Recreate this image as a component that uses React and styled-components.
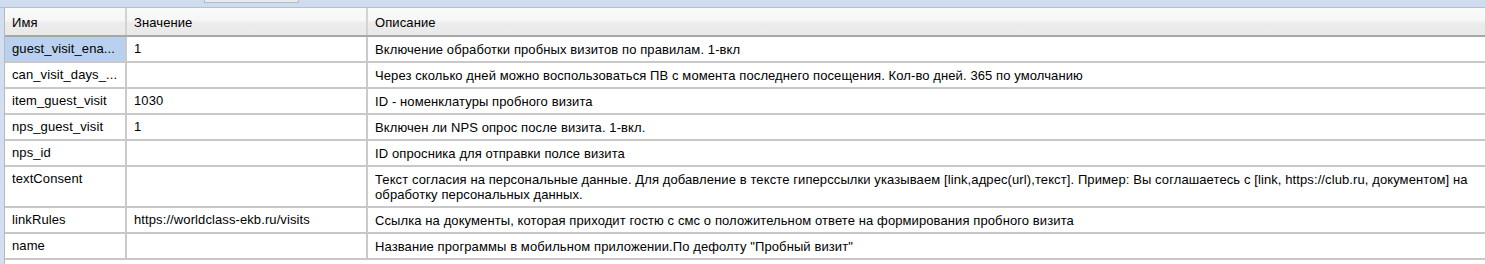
import React from "react";
import styled, { createGlobalStyle } from "styled-components";

const GlobalStyle = createGlobalStyle`
  html, body {
    margin: 0;
    padding: 0;
    background: #ffffff;
    font-family: "Liberation Sans", Arial, sans-serif;
  }
  * { box-sizing: border-box; }
`;

const rows = [
  { name: "guest_visit_ena...", value: "1", desc: "Включение обработки пробных визитов по правилам. 1-вкл", selected: true },
  { name: "can_visit_days_...", value: "", desc: "Через сколько дней можно воспользоваться ПВ с момента последнего посещения. Кол-во дней. 365 по умолчанию" },
  { name: "item_guest_visit", value: "1030", desc: "ID - номенклатуры пробного визита" },
  { name: "nps_guest_visit", value: "1", desc: "Включен ли NPS опрос после визита. 1-вкл." },
  { name: "nps_id", value: "", desc: "ID опросника для отправки полсе визита" },
  {
    name: "textConsent",
    value: "",
    desc: "Текст согласия на персональные данные. Для добавление в тексте гиперссылки указываем [link,адрес(url),текст]. Пример: Вы соглашаетесь с [link, https://club.ru, документом] на обработку персональных данных.",
  },
  { name: "linkRules", value: "https://worldclass-ekb.ru/visits", desc: "Ссылка на документы, которая приходит гостю с смс о положительном ответе на формирования пробного визита" },
  { name: "name", value: "", desc: "Название программы в мобильном приложении.По дефолту \"Пробный визит\"" },
];

export default function App() {
  return (
    <>
      <GlobalStyle />
      <Page>
        <TopBar>
          <TabStub />
        </TopBar>
        <Body>
          <SideStrip />
          <Grid>
            <HeadRow>
              <HeadCell>Имя</HeadCell>
              <HeadCell>Значение</HeadCell>
              <HeadCell>Описание</HeadCell>
            </HeadRow>
            {rows.map((r) => (
              <Row key={r.name}>
                <Cell $selected={r.selected}>{r.name}</Cell>
                <Cell>{r.value}</Cell>
                <DescCell>{r.desc}</DescCell>
              </Row>
            ))}
          </Grid>
        </Body>
      </Page>
    </>
  );
}

const Page = styled.div`
  width: 1485px;
  height: 264px;
  overflow: hidden;
  display: flex;
  flex-direction: column;
  background: #ffffff;
`;

const TopBar = styled.div`
  height: 8px;
  flex: none;
  background: #cfdced;
  border-bottom: 1px solid #a9c1e3;
  position: relative;
`;

const TabStub = styled.div`
  position: absolute;
  left: 204px;
  top: 0;
  width: 95px;
  height: 3px;
  background: #e6e9ee;
  border: 1px solid #b4bcc8;
  border-top: none;
`;

const Body = styled.div`
  display: flex;
  flex: 1;
  min-height: 0;
`;

const SideStrip = styled.div`
  width: 4px;
  flex: none;
  background: #d3dff0;
`;

const Grid = styled.div`
  width: 1500px;
  flex: none;
  font-size: 13px;
  letter-spacing: 0.1px;
  color: #000;
  border-left: 1px solid #b9b9b9;
`;

const HeadRow = styled.div`
  display: grid;
  grid-template-columns: 122px 241px 1fr;
  height: 29px;
  background: linear-gradient(#f9f9f9 0%, #f7f7f7 45%, #ececec 55%, #e9e9e9 100%);
  border-bottom: 2px solid #a7a7a7;
`;

const HeadCell = styled.div`
  display: flex;
  align-items: center;
  padding: 1px 7px 0;
  border-right: 2px solid #d3d3d3;
`;

const Row = styled.div`
  display: grid;
  grid-template-columns: 122px 241px 1fr;
  min-height: 26px;
  border-bottom: 2px solid #c8c8c8;
`;

const Cell = styled.div`
  padding: 0 7px;
  height: 100%;
  white-space: nowrap;
  overflow: hidden;
  line-height: 24px;
  border-right: 2px solid #cacaca;
  background: ${(p) => (p.$selected ? "#b9d1ee" : "#ffffff")};
`;

const DescCell = styled.div`
  padding: 5px 20px 4px 7px;
  line-height: 15px;
  min-height: 24px;
`;
